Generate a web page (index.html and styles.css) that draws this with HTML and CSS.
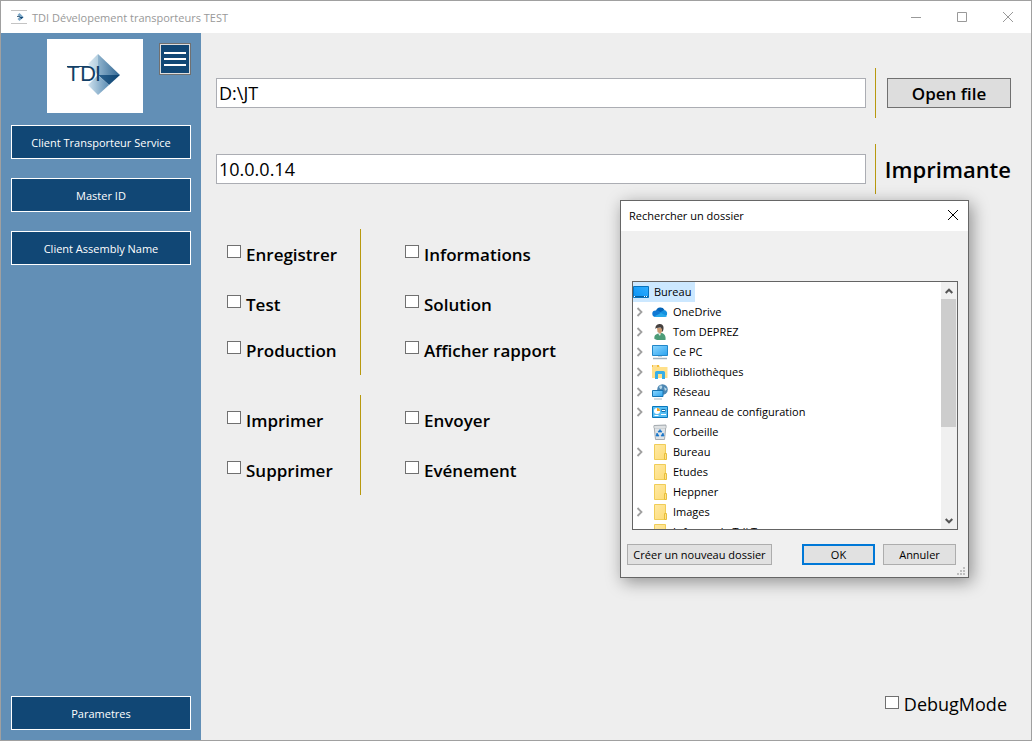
FILE: index.html
```html
<!DOCTYPE html>
<html lang="fr">
<head>
<meta charset="utf-8">
<title>TDI Dévelopement transporteurs TEST</title>
<link rel="stylesheet" href="styles.css">
</head>
<body>
<svg class="defs" aria-hidden="true">
  <defs>
    <linearGradient id="screen" x1="0" y1="1" x2="1" y2="0"><stop offset="0" stop-color="#0a93f5"/><stop offset="1" stop-color="#30aeff"/></linearGradient>
    <linearGradient id="light" x1="0" y1="0" x2="1" y2="1"><stop offset="0" stop-color="#8fd8ff"/><stop offset="1" stop-color="#2ba3ef"/></linearGradient>
    <linearGradient id="fold" x1="0" y1="0" x2="1" y2="1"><stop offset="0" stop-color="#ffe9a4"/><stop offset="1" stop-color="#fddc77"/></linearGradient>
    <linearGradient id="gemTop" x1="0" x2="1"><stop offset="0" stop-color="#dbe9f1"/><stop offset="1" stop-color="#b4cfe0"/></linearGradient>
    <linearGradient id="gemRight" x1="0" x2="1"><stop offset="0" stop-color="#8fb3cd"/><stop offset="1" stop-color="#2f6592"/></linearGradient>
    <linearGradient id="gemDark" x1="0" x2="1"><stop offset="0" stop-color="#2c628f"/><stop offset="1" stop-color="#0d4472"/></linearGradient>
    <linearGradient id="gemLow" x1="0" x2="1"><stop offset="0" stop-color="#cfe2ee"/><stop offset="1" stop-color="#5a8cb3"/></linearGradient>
    <symbol id="chevron" viewBox="0 0 8 10"><path d="M1.500 1l4 4-4 4" fill="none" stroke="#a0a0a0" stroke-width="1.8"/></symbol>
    <symbol id="folder" viewBox="0 0 16 16"><path d="M2.500.5h11v15h-11z" fill="url(#fold)" stroke="#f0cd58"/><path d="M12.500 9.500h2v6h-2z" fill="#ffe28a" stroke="#e8be3c"/></symbol>
  </defs>
</svg>
<div class="window">
  <header class="titlebar">
    <svg class="app-icon" viewBox="0 0 16 16" aria-hidden="true"><path d="M0 1.500h16M0 14.500h16" stroke="#c4c4c4"/><path d="M8.500 4l4 4-4 4-2-2 2-2-2-2z" fill="#7ba6c6"/><path d="M8.500 8h4l-2 2z" fill="#0d4472"/><path d="M6 7.500h3" stroke="#4a6c88"/></svg>
    <h1 class="title">TDI Dévelopement transporteurs TEST</h1>
    <div class="controls">
      <button class="control" aria-label="Réduire"><svg viewBox="0 0 10 10"><path d="M0 5.500h10"/></svg></button>
      <button class="control" aria-label="Agrandir"><svg viewBox="0 0 10 10"><path d="M.5.5h9v9h-9z"/></svg></button>
      <button class="control" aria-label="Fermer"><svg viewBox="0 0 10 10"><path d="M0 0l10 10M10 0L0 10"/></svg></button>
    </div>
  </header>
  <div class="body">
    <nav class="sidebar">
      <div class="brand">
        <svg class="logo" viewBox="0 0 96 74" role="img" aria-label="TDI">
          <path d="M51 15v21L41 25z" fill="url(#gemTop)"/>
          <path d="M51 15l22 21H51z" fill="url(#gemRight)"/>
          <path d="M51 36h22L62 46z" fill="url(#gemDark)"/>
          <path d="M51 36l11 10-11 10-10-10z" fill="url(#gemLow)"/>
          <path d="M20 27.500h20" stroke="#123f66"/>
          <text class="logo-text" y="42"><tspan x="20">T</tspan><tspan x="33">D</tspan><tspan x="48">I</tspan></text>
        </svg>
        <button class="menu" aria-label="Menu"><span></span><span></span><span></span></button>
      </div>
      <button class="nav">Client Transporteur Service</button>
      <button class="nav">Master ID</button>
      <button class="nav">Client Assembly Name</button>
      <button class="nav last">Parametres</button>
    </nav>
    <main class="main">
      <div class="row">
        <input class="field" type="text" value="D:\JT" aria-label="Dossier">
        <div class="side"><button class="open">Open file</button></div>
      </div>
      <div class="row">
        <input class="field" id="printer" type="text" value="10.0.0.14">
        <div class="side"><label class="heading" for="printer">Imprimante</label></div>
      </div>
      <div class="groups">
        <div class="group three">
          <div class="col first">
            <label class="check"><input type="checkbox"><span>Enregistrer</span></label>
            <label class="check"><input type="checkbox"><span>Test</span></label>
            <label class="check"><input type="checkbox"><span>Production</span></label>
          </div>
          <div class="col">
            <label class="check"><input type="checkbox"><span>Informations</span></label>
            <label class="check"><input type="checkbox"><span>Solution</span></label>
            <label class="check"><input type="checkbox"><span>Afficher rapport</span></label>
          </div>
        </div>
        <div class="group">
          <div class="col first">
            <label class="check"><input type="checkbox"><span>Imprimer</span></label>
            <label class="check"><input type="checkbox"><span>Supprimer</span></label>
          </div>
          <div class="col">
            <label class="check"><input type="checkbox"><span>Envoyer</span></label>
            <label class="check"><input type="checkbox"><span>Evénement</span></label>
          </div>
        </div>
      </div>
      <label class="check debug"><input type="checkbox"><span>DebugMode</span></label>
    </main>
  </div>

  <section class="dialog" role="dialog" aria-labelledby="dialog-title">
    <header class="dialog-bar">
      <h2 class="dialog-title" id="dialog-title">Rechercher un dossier</h2>
      <button class="close" aria-label="Fermer"><svg viewBox="0 0 10 10"><path d="M0 0l10 10M10 0L0 10"/></svg></button>
    </header>
    <div class="browser">
      <ul class="tree">
        <li class="item root"><svg class="icon" viewBox="0 0 16 16"><path d="M.5 2.500h15v11H.5z" fill="url(#screen)" stroke="#0672bd"/><path d="M1 12.500h14" stroke="#075f9e"/><path d="M1 12.500h1M11 12.500h1M13 12.500h1" stroke="#fff"/></svg><span>Bureau</span></li>
        <li class="item"><svg class="chev"><use href="#chevron"/></svg><svg class="icon" viewBox="0 0 16 16"><path d="M4 7a4.600 4.600 0 0 1 8.500-1L9 10z" fill="#0364b8"/><path d="M3.500 13a3.300 3.300 0 0 1 .2-6.600c1.300-.3 2.300 0 3.300.7l5 4z" fill="#0f78d4"/><path d="M7 9l5-3a3.500 3.500 0 0 1 1.500 6.500z" fill="#1490df"/><path d="M2 12.500L9 9l6 3c-.6.8-1.500 1-2.500 1h-9c-.6 0-1-.2-1.500-.5z" fill="#28a8ea"/></svg><span>OneDrive</span></li>
        <li class="item"><svg class="chev"><use href="#chevron"/></svg><svg class="icon" viewBox="0 0 16 16"><path d="M2.500 15c-.8-3 1-5 4-5.500l3-.5c3 .5 4.500 3 4 7H5z" fill="#4c9c78"/><path d="M6 9.500l2 2.500 1-3z" fill="#e9f0ed"/><path d="M5 4h5v3.500L8.500 10 5.500 8z" fill="#cb9a73"/><path d="M3.500 5C3 1 6 0 8 0c3 0 4.500 3 3 7l-1 1V5L8.500 3.500 4.500 4z" fill="#46413f"/></svg><span>Tom DEPREZ</span></li>
        <li class="item"><svg class="chev"><use href="#chevron"/></svg><svg class="icon" viewBox="0 0 16 16"><path d="M.5 1.500h15v10H.5z" fill="url(#light)" stroke="#2187c9"/><path d="M1 14.500h14" stroke="#9fb0bd" stroke-width="1.5"/><path d="M6 12h4v1H6z" fill="#c6d2da"/></svg><span>Ce PC</span></li>
        <li class="item"><svg class="chev"><use href="#chevron"/></svg><svg class="icon" viewBox="0 0 16 16"><path d="M0 1h7l1 2h7.500v11H0z" fill="#ffe08a"/><path d="M0 1h7v2H0z" fill="#f4bd38"/><path d="M1 2h4" stroke="#fff"/><path d="M3 15V8.500Q3 7 4.500 7h7Q13 7 13 8.500V15h-3v-5H6v5z" fill="#35aee8"/></svg><span>Bibliothèques</span></li>
        <li class="item"><svg class="chev"><use href="#chevron"/></svg><svg class="icon" viewBox="0 0 16 16"><circle cx="10.500" cy="5.500" r="5.300" fill="#4d87b3"/><path d="M7 3c2-3 4-1 3 1s-2 1-3-1zM12 3l3 2-2 2z" fill="#b8d8e8"/><path d="M.5 6.500h10.500v6H.5z" fill="url(#light)" stroke="#1675b4"/><path d="M2 15h8" stroke="#a8b7c2"/></svg><span>Réseau</span></li>
        <li class="item"><svg class="chev"><use href="#chevron"/></svg><svg class="icon" viewBox="0 0 16 16"><path d="M.5 2.500h15v11H.5z" fill="#55bdf3" stroke="#0878bd"/><circle cx="5" cy="7" r="3" fill="#fff"/><path d="M5 7V4a3 3 0 0 1 3 3z" fill="#f5a623"/><path d="M9.500 5h4v3h-4z" fill="#176fa8"/><path d="M10 6.500h3M2.500 11.500h4M9 10.500h5" stroke="#fff"/></svg><span>Panneau de configuration</span></li>
        <li class="item"><span class="chev"></span><svg class="icon" viewBox="0 0 16 16"><path d="M2 1.500l12-.5-1.500 14.500h-9z" fill="#dfe3e6" stroke="#a5abb0"/><path d="M2 2h12v2H2z" fill="#f7f8f9" stroke="#a5abb0" stroke-width=".6"/><path d="M8 5.500l2 2.500H6zM5 9l2 3H4zM11 9l1 3H9z" fill="#1674c8" stroke="#1674c8" stroke-width=".7"/></svg><span>Corbeille</span></li>
        <li class="item"><svg class="chev"><use href="#chevron"/></svg><svg class="icon"><use href="#folder"/></svg><span>Bureau</span></li>
        <li class="item"><span class="chev"></span><svg class="icon"><use href="#folder"/></svg><span>Etudes</span></li>
        <li class="item"><span class="chev"></span><svg class="icon"><use href="#folder"/></svg><span>Heppner</span></li>
        <li class="item"><svg class="chev"><use href="#chevron"/></svg><svg class="icon"><use href="#folder"/></svg><span>Images</span></li>
        <li class="item"><span class="chev"></span><svg class="icon"><use href="#folder"/></svg><span>Informe de Tdi T</span></li>
      </ul>
      <div class="scroll">
        <button class="arrow" aria-label="Haut"><svg viewBox="0 0 8 6"><path d="M.7 5L4 1.700 7.300 5"/></svg></button>
        <div class="track"><div class="thumb"></div></div>
        <button class="arrow" aria-label="Bas"><svg viewBox="0 0 8 6"><path d="M.7 1L4 4.300 7.300 1"/></svg></button>
      </div>
    </div>
    <footer class="actions">
      <button class="action wide">Créer un nouveau dossier</button>
      <button class="action primary">OK</button>
      <button class="action">Annuler</button>
    </footer>
    <svg class="grip" viewBox="0 0 8 8" aria-hidden="true"><path d="M6 0h2v2H6zM3 3h2v2H3zM6 3h2v2H6zM0 6h2v2H0zM3 6h2v2H3zM6 6h2v2H6z" fill="#bfbfbf"/></svg>
  </section>
</div>
</body>
</html>
```
FILE: styles.css
```css
* { box-sizing: border-box; }
body { margin: 0; font-family: "Open Sans", "Noto Sans", sans-serif; font-size: 11px; color: #000; }
button, input { font: inherit; color: inherit; margin: 0; padding: 0; }
h1, h2, ul { margin: 0; padding: 0; font-weight: 400; font-size: inherit; list-style: none; }
.defs { position: absolute; width: 0; height: 0; }

.window { position: relative; display: flex; flex-direction: column; min-height: 100vh; border: 1px solid #a0a0a0; background: #eee; }
.titlebar { display: flex; align-items: center; height: 32px; padding-left: 10px; gap: 5px; background: #fff; color: #999; }
.app-icon { width: 16px; height: 16px; }
.title { flex: 1; font-size: 11px; }
.controls { display: flex; }
.control { display: grid; place-items: center; width: 46px; height: 30px; border: 0; background: none; }
.control svg, .close svg { width: 10px; height: 10px; fill: none; stroke: #999; overflow: visible; }

.body { display: flex; flex: 1; }
.sidebar { display: flex; flex-direction: column; gap: 19px; width: 200px; padding: 6px 10px 10px; background: #628fb6; }
.brand { display: flex; justify-content: flex-end; gap: 16px; height: 74px; margin-bottom: -7px; }
.logo { width: 96px; height: 74px; background: #fff; }
.logo-text { font-family: Lato, sans-serif; font-weight: 400; font-size: 21px; fill: #123f66; }
.menu { display: flex; flex-direction: column; align-items: center; justify-content: center; gap: 4px; width: 32px; height: 32px; margin: 4px 0 0; border: 1px solid #707070; outline: 1px solid #ddd; outline-offset: -2px; background: #114775; }
.menu span { width: 22px; height: 2px; background: #fff; }
.nav { height: 34px; border: 1px solid #fff; background: #114775; color: #fff; }
.last { margin-top: auto; }

.main { display: flex; flex: 1; flex-direction: column; padding: 35px 20px 28px 15px; }
.row { display: flex; align-items: center; gap: 9px; height: 50px; margin-bottom: 26px; }
.field { flex: 1; min-width: 0; height: 30px; padding: 0 2px; border: 1px solid #abadb3; background: #fff; font-size: 18px; }
.side { display: flex; align-items: center; justify-content: flex-end; width: 136px; height: 50px; border-left: 1px solid #b8990e; }
.open { width: 124px; height: 30px; border: 1px solid #707070; background: #ddd; font-size: 17px; font-weight: 600; }
.heading { font-size: 22px; font-weight: 600; }

.groups { display: grid; gap: 20px; margin-top: 9px; padding-left: 11px; }
.group { display: flex; }
.col { display: grid; grid-template-rows: 50px 50px; margin-left: 44px; }
.three .col { grid-template-rows: 50px 46px 50px; }
.col.first { width: 134px; margin-left: 0; border-right: 1px solid #b8990e; }
.check { display: flex; align-items: flex-start; gap: 5px; padding-top: 16px; font-size: 17px; font-weight: 600; line-height: 20px; white-space: nowrap; }
.check input { appearance: none; flex: none; width: 14px; height: 13px; border: 1px solid #707070; background: #fff; }
.debug { align-self: flex-end; margin-top: auto; padding: 0 4px 0 0; font-size: 18px; font-weight: 400; line-height: 16px; }

.dialog { position: absolute; top: 199px; left: 619px; width: 349px; border: 1px solid #666; background: #f0f0f0; box-shadow: 3px 4px 16px rgba(0, 0, 0, .4); }
.dialog-bar { display: flex; align-items: center; justify-content: space-between; height: 30px; padding: 0 10px 2px 8px; background: #fff; }
.close { display: grid; place-items: center; width: 10px; height: 10px; border: 0; background: none; }
.close svg { stroke: #000; }
.browser { display: flex; height: 249px; margin: 50px 10px 0 11px; border: 1px solid #646464; background: #fff; overflow: hidden; }
.tree { flex: 1; }
.item { display: flex; align-items: center; height: 20px; padding-left: 3px; }
.item span { padding-bottom: 2px; white-space: nowrap; }
.icon { flex: none; width: 16px; height: 16px; margin-right: 5px; }
.chev { flex: none; width: 8px; height: 10px; margin-right: 8px; }
.root { width: 62px; padding-left: 0; background: #cce8ff; }
.scroll { display: flex; flex-direction: column; width: 16px; background: #f0f0f0; }
.arrow { display: grid; place-items: center; height: 17px; border: 0; background: none; }
.arrow svg { width: 8px; height: 6px; fill: none; stroke: #555; stroke-width: 2; }
.track { flex: 1; }
.thumb { width: 15px; height: 60%; background: #cdcdcd; }
.actions { display: flex; gap: 8px; padding: 14px 12px 12px 6px; }
.action { width: 73px; height: 21px; border: 1px solid #adadad; background: #e1e1e1; }
.wide { width: 145px; margin-right: auto; }
.primary { border: 2px solid #0078d7; }
.grip { position: absolute; right: 3px; bottom: 2px; width: 8px; height: 8px; }
```
